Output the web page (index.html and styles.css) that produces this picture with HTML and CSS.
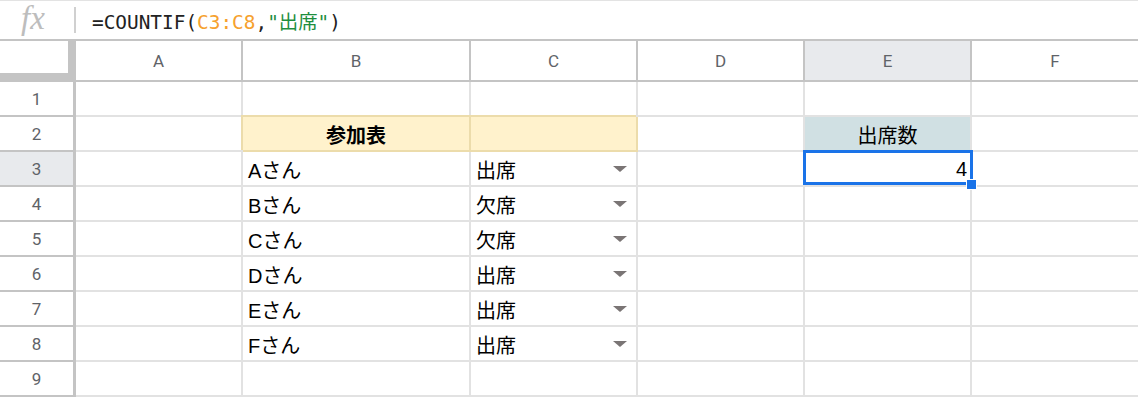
FILE: index.html
```html
<!DOCTYPE html>
<html lang="ja">
<head>
    <meta charset="UTF-8">
    <meta name="viewport" content="width=device-width, initial-scale=1.0">
    <title>参加表 - スプレッドシート</title>
    <link rel="stylesheet" href="styles.css">
</head>
<body>

<!-- Formula bar -->
<div class="formula-bar">
    <span class="fx">fx</span>
    <span class="divider"></span>
    <span class="formula">=COUNTIF(<span class="ref">C3:C8</span>,<span class="str">"出席"</span>)</span>
</div>

<!-- Sheet grid -->
<div class="sheet">
    <div class="corner"></div>
    <div class="col-head">A</div>
    <div class="col-head">B</div>
    <div class="col-head">C</div>
    <div class="col-head">D</div>
    <div class="col-head selected">E</div>
    <div class="col-head last">F</div>

    <div class="row-head">1</div>
    <div class="cell"></div>
    <div class="cell"></div>
    <div class="cell"></div>
    <div class="cell"></div>
    <div class="cell"></div>
    <div class="cell last"></div>

    <div class="row-head">2</div>
    <div class="cell"></div>
    <div class="cell title">参加表</div>
    <div class="cell title"></div>
    <div class="cell"></div>
    <div class="cell label">出席数</div>
    <div class="cell last"></div>

    <div class="row-head selected">3</div>
    <div class="cell"></div>
    <div class="cell">Aさん</div>
    <div class="cell drop">出席<span class="arrow"></span></div>
    <div class="cell"></div>
    <div class="cell num active">4</div>
    <div class="cell last"></div>

    <div class="row-head">4</div>
    <div class="cell"></div>
    <div class="cell">Bさん</div>
    <div class="cell drop">欠席<span class="arrow"></span></div>
    <div class="cell"></div>
    <div class="cell"></div>
    <div class="cell last"></div>

    <div class="row-head">5</div>
    <div class="cell"></div>
    <div class="cell">Cさん</div>
    <div class="cell drop">欠席<span class="arrow"></span></div>
    <div class="cell"></div>
    <div class="cell"></div>
    <div class="cell last"></div>

    <div class="row-head">6</div>
    <div class="cell"></div>
    <div class="cell">Dさん</div>
    <div class="cell drop">出席<span class="arrow"></span></div>
    <div class="cell"></div>
    <div class="cell"></div>
    <div class="cell last"></div>

    <div class="row-head">7</div>
    <div class="cell"></div>
    <div class="cell">Eさん</div>
    <div class="cell drop">出席<span class="arrow"></span></div>
    <div class="cell"></div>
    <div class="cell"></div>
    <div class="cell last"></div>

    <div class="row-head">8</div>
    <div class="cell"></div>
    <div class="cell">Fさん</div>
    <div class="cell drop">出席<span class="arrow"></span></div>
    <div class="cell"></div>
    <div class="cell"></div>
    <div class="cell last"></div>

    <div class="row-head">9</div>
    <div class="cell"></div>
    <div class="cell"></div>
    <div class="cell"></div>
    <div class="cell"></div>
    <div class="cell"></div>
    <div class="cell last"></div>
</div>

</body>
</html>
```

FILE: styles.css
```css
* {
    box-sizing: border-box;
}

body {
    margin: 0;
    background: #fff;
    font-family: "Liberation Sans", Arial, "Noto Sans CJK JP", sans-serif;
    color: #000;
    overflow: hidden;
}

/* Formula bar */
.formula-bar {
    display: flex;
    align-items: center;
    height: 41px;
    border-top: 1px solid #e3e3e3;
    border-bottom: 2px solid #c4c4c4;
}

.fx {
    width: 74px;
    padding-left: 21px;
    margin-bottom: 4px;
    font-family: "Liberation Serif", serif;
    font-style: italic;
    font-size: 33px;
    line-height: 36px;
    color: #bdbdbd;
}

.divider {
    width: 2px;
    height: 26px;
    background: #d0d0d0;
    margin-right: 16px;
}

.formula {
    font-family: "DejaVu Sans Mono", "Noto Sans CJK JP", monospace;
    font-size: 19.4px;
    color: #222;
}

.formula .ref {
    color: #f6a12e;
}

.formula .str {
    color: #1e8e3e;
}

/* Grid */
.sheet {
    display: grid;
    grid-template-columns: 76px 167px 228px 167px 167px 167px 1fr;
    grid-template-rows: 41px;
    grid-auto-rows: 35px;
}

.corner {
    border-right: 8px solid #c4c4c4;
    border-bottom: 9px solid #c4c4c4;
}

.col-head {
    display: flex;
    align-items: center;
    justify-content: center;
    border-right: 2px solid #c4c4c4;
    border-bottom: 2px solid #c4c4c4;
    font-family: Roboto, "Liberation Sans", sans-serif;
    font-size: 17px;
    color: #5f6368;
}

.row-head {
    display: flex;
    align-items: center;
    justify-content: center;
    border-right: 3px solid #c4c4c4;
    border-bottom: 2px solid #c4c4c4;
    font-family: Roboto, "Liberation Sans", sans-serif;
    font-size: 17px;
    color: #5f6368;
    padding-top: 1px;
}

.selected {
    background: #e8eaed;
}

.cell {
    position: relative;
    display: flex;
    align-items: center;
    padding: 2px 5px 0;
    border-right: 2px solid #e2e2e2;
    border-bottom: 2px solid #e2e2e2;
    font-size: 20px;
    white-space: nowrap;
}

.last {
    border-right: none;
}

.title {
    justify-content: center;
    font-weight: bold;
    background: #fff2cc;
    border-color: #ecdcab;
    box-shadow: -2px -2px 0 0 #ecdcab;
}

.label {
    justify-content: center;
    background: #d0e0e3;
}

.num {
    justify-content: flex-end;
    padding-right: 3px;
}

.drop {
    justify-content: space-between;
    padding-right: 9px;
}

.arrow {
    width: 0;
    height: 0;
    border-left: 7px solid transparent;
    border-right: 7px solid transparent;
    border-top: 6px solid #7a7575;
    margin-top: -2px;
}

/* Active cell outline + fill handle */
.active {
    z-index: 1;
}

.active::before {
    content: "";
    position: absolute;
    top: -2px;
    left: -2px;
    right: -3px;
    bottom: 0;
    border: 3px solid #1a73e8;
}

.active::after {
    content: "";
    position: absolute;
    right: -6px;
    bottom: -4px;
    width: 9px;
    height: 9px;
    background: #1a73e8;
    box-shadow: 0 0 0 1px #fff;
}
```
